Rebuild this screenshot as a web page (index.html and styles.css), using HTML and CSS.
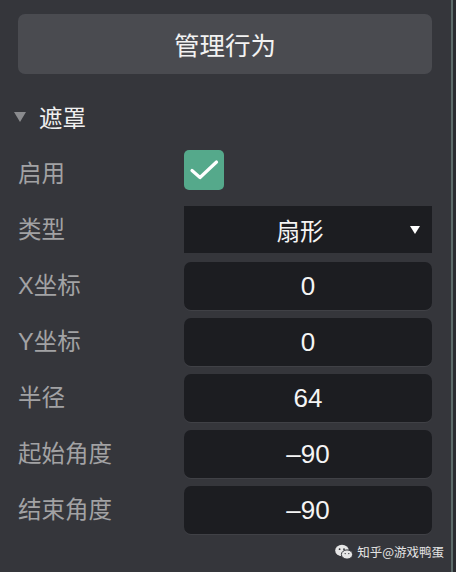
FILE: index.html
```html
<!DOCTYPE html>
<html lang="zh">
<head>
<meta charset="utf-8">
<link rel="stylesheet" href="styles.css">
</head>
<body>
<div class="screen">
  <div class="panel">
    <div class="manage-btn">管理行为</div>
    <div class="section-head">
      <span class="caret"></span>
      <span class="section-title">遮罩</span>
    </div>
    <div class="rows">
      <div class="row">
        <span class="label">启用</span>
        <span class="checkbox">
          <svg width="40" height="40" viewBox="0 0 40 40"><path d="M8 20.5 L16 27.5 L32.5 12" fill="none" stroke="#ffffff" stroke-width="3.2" stroke-linecap="round" stroke-linejoin="round"/></svg>
        </span>
      </div>
      <div class="row">
        <span class="label">类型</span>
        <div class="select"><span class="select-text">扇形</span><span class="select-arrow"></span></div>
      </div>
      <div class="row">
        <span class="label">X坐标</span>
        <div class="field">0</div>
      </div>
      <div class="row">
        <span class="label">Y坐标</span>
        <div class="field">0</div>
      </div>
      <div class="row">
        <span class="label">半径</span>
        <div class="field">64</div>
      </div>
      <div class="row">
        <span class="label">起始角度</span>
        <div class="field">–90</div>
      </div>
      <div class="row">
        <span class="label">结束角度</span>
        <div class="field">–90</div>
      </div>
    </div>
  </div>
  <div class="scroll-edge"><div class="scroll-line"></div></div>
  <div class="watermark">
    <svg width="18" height="16" viewBox="0 0 18 16">
      <ellipse cx="7" cy="6.5" rx="6.8" ry="5.8" fill="#e6e6e6"/>
      <circle cx="4.6" cy="5.2" r="0.9" fill="#35363b"/>
      <circle cx="9" cy="5.2" r="0.9" fill="#35363b"/>
      <ellipse cx="12" cy="10.5" rx="5.6" ry="4.6" fill="#e6e6e6" stroke="#35363b" stroke-width="1"/>
      <circle cx="10.2" cy="9.6" r="0.7" fill="#35363b"/>
      <circle cx="13.8" cy="9.6" r="0.7" fill="#35363b"/>
    </svg>
    <span class="wm-text">知乎@游戏鸭蛋</span>
  </div>
</div>
</body>
</html>
```
FILE: styles.css
```css
* { box-sizing: border-box; }
html, body {
  margin: 0;
  padding: 0;
  background: #35363b;
}
body {
  width: 456px;
  height: 572px;
  overflow: hidden;
  font-family: "Liberation Sans", "Noto Sans CJK SC", sans-serif;
}
.screen {
  position: relative;
  display: flex;
  width: 456px;
  height: 572px;
}
.panel {
  width: 451px;
  padding: 14px 19px 0 18px;
}
.manage-btn {
  height: 60px;
  border-radius: 7px;
  background: #4a4b50;
  color: #f2f2f2;
  font-family: "Noto Sans CJK SC", sans-serif;
  font-size: 25.5px;
  line-height: 60px;
  text-align: center;
}
.section-head {
  display: flex;
  align-items: center;
  height: 40px;
  margin: 23px 0 13px -4px;
}
.caret {
  width: 0;
  height: 0;
  border-left: 6px solid transparent;
  border-right: 6px solid transparent;
  border-top: 10px solid #8a8b8e;
  margin-right: 13px;
}
.section-title {
  color: #f0f0f0;
  font-family: "Noto Sans CJK SC", sans-serif;
  font-size: 23.5px;
  line-height: 30px;
}
.rows {
  display: flex;
  flex-direction: column;
  gap: 8px;
}
.row {
  display: flex;
  align-items: center;
  height: 48px;
}
.label {
  width: 166px;
  color: #a2a2a4;
  font-family: "Liberation Sans", "Noto Sans CJK SC", sans-serif;
  font-size: 23.5px;
  line-height: 30px;
  white-space: nowrap;
}
.checkbox {
  align-self: flex-start;
  width: 40px;
  height: 40px;
  border-radius: 5px;
  background: #55a98b;
  display: block;
}
.checkbox svg { display: block; }
.select {
  width: 248px;
  height: 47px;
  margin-bottom: 1px;
  align-self: flex-start;
  background: #1c1d21;
  display: flex;
  align-items: center;
  padding-right: 16px;
  position: relative;
}
.select-text {
  flex: 1;
  text-align: center;
  color: #f4f4f4;
  font-family: "Noto Sans CJK SC", sans-serif;
  font-size: 23.5px;
  line-height: 30px;
}
.select-arrow {
  position: absolute;
  right: 12px;
  top: 20px;
  width: 0;
  height: 0;
  border-left: 5px solid transparent;
  border-right: 5px solid transparent;
  border-top: 8px solid #ffffff;
}
.field {
  width: 248px;
  height: 48px;
  border-radius: 7px;
  background: #1c1d21;
  box-shadow: 0 1px 0 #404146;
  color: #f4f4f4;
  font-family: "Liberation Sans", sans-serif;
  font-size: 26px;
  line-height: 48px;
  text-align: center;
}
.scroll-edge {
  width: 5px;
  height: 572px;
  background: #2b2c30;
}
.scroll-line {
  width: 2px;
  height: 100%;
  background: #5d6c6a;
}
.watermark {
  position: absolute;
  right: 12px;
  top: 543px;
  display: flex;
  align-items: center;
  gap: 4px;
}
.watermark svg { display: block; }
.wm-text {
  color: #e4e4e4;
  font-family: "Noto Sans CJK SC", sans-serif;
  font-size: 12.5px;
  line-height: 18px;
}
```
